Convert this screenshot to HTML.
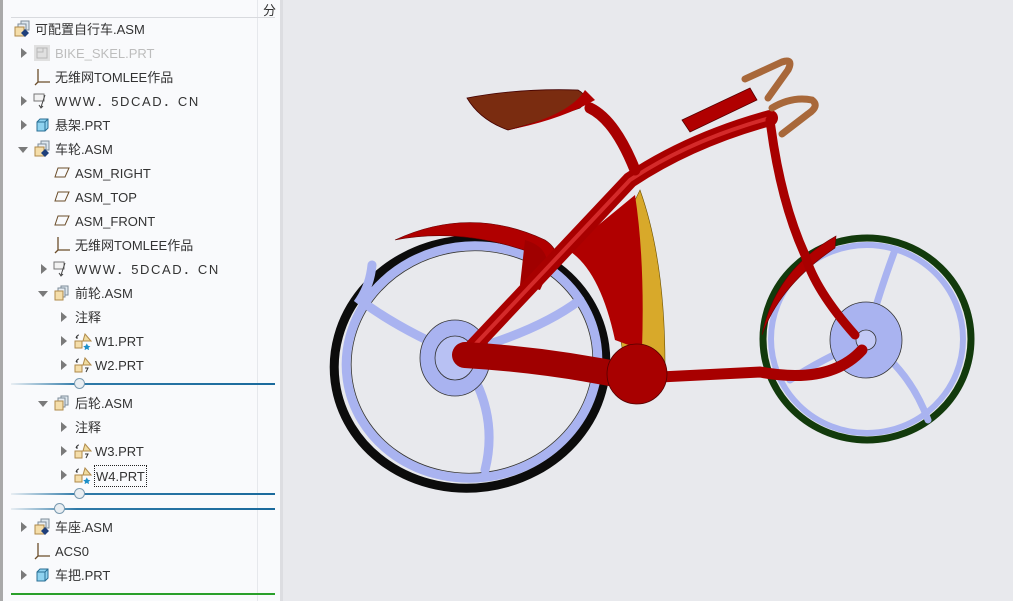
<!DOCTYPE html>
<html><head><meta charset="utf-8"><style>
*{margin:0;padding:0;box-sizing:border-box}
body{width:1013px;height:601px;overflow:hidden;background:#e8e9ed;font-family:"Liberation Sans","Noto Sans CJK SC",sans-serif;position:relative}
#lb{position:absolute;left:0;top:0;width:3px;height:601px;background:#a9a9a9}
#panel{position:absolute;left:3px;top:0;width:277px;height:601px;background:#f9fafc}
#strip{position:absolute;left:280px;top:0;width:3px;height:601px;background:#dcdde1}
#vsep{position:absolute;left:257px;top:0;width:1px;height:601px;background:#e6e8ec}
#hline{position:absolute;left:11px;top:17px;width:264px;height:1px;background:#d8dade}
#fen{position:absolute;left:263px;top:0px;font-size:13px;color:#333}
.r{position:absolute;font-size:13px;color:#333;height:24px;line-height:26px;white-space:nowrap}
.a{position:absolute;width:0;height:0;border-top:5px solid transparent;border-bottom:5px solid transparent;border-left:6px solid #7a7a7a}
.d{position:absolute;width:0;height:0;border-left:5px solid transparent;border-right:5px solid transparent;border-top:6px solid #7a7a7a}
.ic{position:absolute}
.w{letter-spacing:1.6px}
.sep{position:absolute;left:11px;width:264px;height:2px;background:linear-gradient(90deg,#e8eef3,#2f7aa8 25%,#1a6a9c)}
.knob{position:absolute;width:11px;height:11px;border-radius:50%;border:1px solid #7a9ab0;background:#e9eef2}
</style></head><body>
<div id="lb"></div><div id="panel"></div><div id="strip"></div><div id="vsep"></div><div id="hline"></div>
<div id="fen">分</div>

<svg class="ic" style="left:14px;top:20px" width="20" height="18"><rect x="7" y="1" width="8" height="9" fill="#dfe8ef" stroke="#7d8c99"/><rect x="4" y="4" width="8" height="9" fill="#e8eef4" stroke="#7d8c99"/><rect x="1" y="7" width="9" height="9" fill="#f5deaa" stroke="#b08a4a"/><path d="M11 9l4 4-4 4-4-4z" fill="#1f3f7a"/></svg>
<div class="r" style="left:35px;top:17px">可配置自行车.ASM</div>

<div class="a" style="left:21px;top:48px"></div>
<svg class="ic" style="left:34px;top:45px" width="16" height="16"><rect x="0" y="0" width="16" height="16" fill="#e0e0e0"/><rect x="3" y="3" width="10" height="10" fill="none" stroke="#b8b8b8"/><path d="M3 7h6V3" fill="none" stroke="#b8b8b8"/></svg>
<div class="r" style="left:55px;top:41px;color:#bdbdbd">BIKE_SKEL.PRT</div>

<svg class="ic" style="left:34px;top:68px" width="18" height="18"><path d="M4 1v13h12M4 14l-3 3" fill="none" stroke="#6b4d2a" stroke-width="1.3"/></svg>
<div class="r" style="left:55px;top:65px">无维网TOMLEE作品</div>

<div class="a" style="left:21px;top:96px"></div>
<svg class="ic" style="left:33px;top:92px" width="18" height="18"><rect x="1" y="2" width="10" height="7" fill="#f2f2f2" stroke="#777"/><path d="M12 3l-4 12M6 13l2 3 2-2" fill="none" stroke="#444"/></svg>
<div class="r w" style="left:55px;top:89px">WWW．5DCAD．CN</div>

<div class="a" style="left:21px;top:120px"></div>
<svg class="ic" style="left:34px;top:118px" width="16" height="16"><path d="M3 4l3-3h8v9l-3 3H3z" fill="#8fd3f0" stroke="#2a6f95"/><path d="M3 4h8v9M11 4l3-3" fill="none" stroke="#2a6f95"/></svg>
<div class="r" style="left:55px;top:113px">悬架.PRT</div>

<div class="d" style="left:18px;top:147px"></div>
<svg class="ic" style="left:34px;top:140px" width="20" height="18"><rect x="7" y="1" width="8" height="9" fill="#dfe8ef" stroke="#7d8c99"/><rect x="4" y="4" width="8" height="9" fill="#e8eef4" stroke="#7d8c99"/><rect x="1" y="7" width="9" height="9" fill="#f5deaa" stroke="#b08a4a"/><path d="M11 9l4 4-4 4-4-4z" fill="#1f3f7a"/></svg>
<div class="r" style="left:55px;top:137px">车轮.ASM</div>

<svg class="ic" style="left:54px;top:167px" width="16" height="12"><path d="M4 1h11l-4 9H1z" fill="none" stroke="#6b4d2a"/></svg>
<div class="r" style="left:75px;top:161px">ASM_RIGHT</div>
<svg class="ic" style="left:54px;top:191px" width="16" height="12"><path d="M4 1h11l-4 9H1z" fill="none" stroke="#6b4d2a"/></svg>
<div class="r" style="left:75px;top:185px">ASM_TOP</div>
<svg class="ic" style="left:54px;top:215px" width="16" height="12"><path d="M4 1h11l-4 9H1z" fill="none" stroke="#6b4d2a"/></svg>
<div class="r" style="left:75px;top:209px">ASM_FRONT</div>
<svg class="ic" style="left:54px;top:236px" width="18" height="18"><path d="M4 1v13h12M4 14l-3 3" fill="none" stroke="#6b4d2a" stroke-width="1.3"/></svg>
<div class="r" style="left:75px;top:233px">无维网TOMLEE作品</div>

<div class="a" style="left:41px;top:264px"></div>
<svg class="ic" style="left:53px;top:260px" width="18" height="18"><rect x="1" y="2" width="10" height="7" fill="#f2f2f2" stroke="#777"/><path d="M12 3l-4 12M6 13l2 3 2-2" fill="none" stroke="#444"/></svg>
<div class="r w" style="left:75px;top:257px">WWW．5DCAD．CN</div>

<div class="d" style="left:38px;top:291px"></div>
<svg class="ic" style="left:54px;top:285px" width="16" height="16"><rect x="7" y="1" width="7" height="9" fill="#dfe8ef" stroke="#7d8c99"/><rect x="4" y="3" width="7" height="9" fill="#e8eef4" stroke="#7d8c99"/><rect x="1" y="6" width="8" height="9" fill="#f5deaa" stroke="#b08a4a"/></svg>
<div class="r" style="left:75px;top:281px">前轮.ASM</div>

<div class="a" style="left:61px;top:312px"></div>
<div class="r" style="left:75px;top:305px">注释</div>
<div class="a" style="left:61px;top:336px"></div>
<svg class="ic" style="left:74px;top:333px" width="18" height="17"><path d="M11 1l6 7h-8z" fill="#f0dca0" stroke="#b08a4a"/><rect x="1" y="8" width="7" height="7" fill="#f5deaa" stroke="#b08a4a"/><path d="M2 5q1-3 3-3M3 3v3" fill="none" stroke="#333"/><path d="M13 10l1.5 3 3 .5-2.3 2 .6 3-2.8-1.6-2.8 1.6.6-3-2.3-2 3-.5z" transform="scale(.8) translate(3,3)" fill="#1d8fc9"/></svg>
<div class="r" style="left:95px;top:329px">W1.PRT</div>
<div class="a" style="left:61px;top:360px"></div>
<svg class="ic" style="left:74px;top:357px" width="18" height="17"><path d="M11 1l6 7h-8z" fill="#f0dca0" stroke="#b08a4a"/><rect x="1" y="8" width="7" height="7" fill="#f5deaa" stroke="#b08a4a"/><path d="M2 5q1-3 3-3M3 3v3M11 11h3l-2 4" fill="none" stroke="#333"/></svg>
<div class="r" style="left:95px;top:353px">W2.PRT</div>

<div class="sep" style="top:383px"></div><div class="knob" style="left:74px;top:378px"></div>

<div class="d" style="left:38px;top:401px"></div>
<svg class="ic" style="left:54px;top:395px" width="16" height="16"><rect x="7" y="1" width="7" height="9" fill="#dfe8ef" stroke="#7d8c99"/><rect x="4" y="3" width="7" height="9" fill="#e8eef4" stroke="#7d8c99"/><rect x="1" y="6" width="8" height="9" fill="#f5deaa" stroke="#b08a4a"/></svg>
<div class="r" style="left:75px;top:391px">后轮.ASM</div>
<div class="a" style="left:61px;top:422px"></div>
<div class="r" style="left:75px;top:415px">注释</div>
<div class="a" style="left:61px;top:446px"></div>
<svg class="ic" style="left:74px;top:443px" width="18" height="17"><path d="M11 1l6 7h-8z" fill="#f0dca0" stroke="#b08a4a"/><rect x="1" y="8" width="7" height="7" fill="#f5deaa" stroke="#b08a4a"/><path d="M2 5q1-3 3-3M3 3v3M11 11h3l-2 4" fill="none" stroke="#333"/></svg>
<div class="r" style="left:95px;top:439px">W3.PRT</div>
<div class="a" style="left:61px;top:470px"></div>
<svg class="ic" style="left:74px;top:467px" width="18" height="17"><path d="M11 1l6 7h-8z" fill="#f0dca0" stroke="#b08a4a"/><rect x="1" y="8" width="7" height="7" fill="#f5deaa" stroke="#b08a4a"/><path d="M2 5q1-3 3-3M3 3v3" fill="none" stroke="#333"/><path d="M13 10l1.5 3 3 .5-2.3 2 .6 3-2.8-1.6-2.8 1.6.6-3-2.3-2 3-.5z" transform="scale(.8) translate(3,3)" fill="#1d8fc9"/></svg>
<div class="r" style="left:94px;top:465px;height:22px;line-height:22px;border:1px dotted #222;padding:0 1px">W4.PRT</div>

<div class="sep" style="top:493px"></div><div class="knob" style="left:74px;top:488px"></div>
<div class="sep" style="top:508px"></div><div class="knob" style="left:54px;top:503px"></div>

<div class="a" style="left:21px;top:522px"></div>
<svg class="ic" style="left:34px;top:518px" width="20" height="18"><rect x="7" y="1" width="8" height="9" fill="#dfe8ef" stroke="#7d8c99"/><rect x="4" y="4" width="8" height="9" fill="#e8eef4" stroke="#7d8c99"/><rect x="1" y="7" width="9" height="9" fill="#f5deaa" stroke="#b08a4a"/><path d="M11 9l4 4-4 4-4-4z" fill="#1f3f7a"/></svg>
<div class="r" style="left:55px;top:515px">车座.ASM</div>
<svg class="ic" style="left:34px;top:542px" width="18" height="18"><path d="M4 1v13h12M4 14l-3 3" fill="none" stroke="#6b4d2a" stroke-width="1.3"/></svg>
<div class="r" style="left:55px;top:539px">ACS0</div>
<div class="a" style="left:21px;top:570px"></div>
<svg class="ic" style="left:34px;top:568px" width="16" height="16"><path d="M3 4l3-3h8v9l-3 3H3z" fill="#8fd3f0" stroke="#2a6f95"/><path d="M3 4h8v9M11 4l3-3" fill="none" stroke="#2a6f95"/></svg>
<div class="r" style="left:55px;top:563px">车把.PRT</div>
<div style="position:absolute;left:11px;top:593px;width:264px;height:2px;background:#2aa02a"></div>

<svg style="position:absolute;left:0;top:0" width="1013" height="601">
<ellipse cx="470" cy="364" rx="136" ry="124" transform="rotate(-8 470 364)" fill="none" stroke="#0c0c0c" stroke-width="9"/>
<ellipse cx="472" cy="362" rx="126" ry="116" transform="rotate(-8 472 362)" fill="none" stroke="#a9b3f0" stroke-width="9"/>
<ellipse cx="472" cy="362" rx="121" ry="111" transform="rotate(-8 472 362)" fill="none" stroke="#333" stroke-width="0.8"/>
<g fill="none" stroke="#a9b3f0" stroke-width="9" stroke-linecap="round">
<path d="M460 355 Q400 330 360 300 Q370 285 372 265"/><path d="M460 355 Q500 410 485 470"/><path d="M470 350 Q540 330 580 300"/></g>
<ellipse cx="455" cy="358" rx="35" ry="38" fill="#a9b3f0" stroke="#333" stroke-width="0.8"/>
<ellipse cx="455" cy="358" rx="20" ry="22" fill="#b8c1f3" stroke="#333" stroke-width="0.8"/>
<ellipse cx="867" cy="339" rx="104" ry="101" fill="none" stroke="#123a0c" stroke-width="7"/>
<ellipse cx="867" cy="339" rx="96" ry="94" fill="none" stroke="#a9b3f0" stroke-width="6"/>
<g fill="none" stroke="#a9b3f0" stroke-width="7" stroke-linecap="round">
<path d="M866 340 Q880 290 895 250"/><path d="M866 340 Q910 370 928 420"/><path d="M866 340 Q820 360 790 380"/></g>
<ellipse cx="866" cy="340" rx="36" ry="38" fill="#a9b3f0" stroke="#333" stroke-width="0.8"/>
<ellipse cx="866" cy="340" rx="10" ry="10" fill="#c2c9f5" stroke="#333" stroke-width="0.8"/>
<path d="M395 240 Q470 205 545 240 Q560 250 555 262 Q470 225 395 240z" fill="#b00000" stroke="#600" stroke-width="0.6"/>
<path d="M525 240 Q560 250 540 290 L520 285z" fill="#a00000"/>
<path d="M640 190 Q665 260 665 365 L625 365 Q615 300 600 272z" fill="#d8a92a" stroke="#6a5000" stroke-width="0.6"/>
<path d="M635 195 L568 250 Q600 270 615 340 L642 350 Q645 260 635 195z" fill="#b00000"/>
<path d="M836 236 Q775 270 762 335 Q780 285 835 248z" fill="#b00000" stroke="#600" stroke-width="0.6"/>
<g fill="none" stroke-linecap="round">
<path d="M470 350 L630 180 Q690 140 770 118" stroke="#a80000" stroke-width="16"/>
<path d="M470 350 L630 180 Q690 140 770 118" stroke="#d42a2a" stroke-width="4"/>
<path d="M770 120 Q780 200 805 255 Q815 290 855 335" stroke="#a80000" stroke-width="9"/>
<path d="M590 108 Q615 120 635 170" stroke="#a80000" stroke-width="11"/>
<path d="M465 355 Q550 360 635 378" stroke="#a00000" stroke-width="26"/>
<path d="M640 378 L760 372 Q830 385 862 350" stroke="#a80000" stroke-width="11"/>
</g>
<path d="M682 120 L750 88 L757 100 L690 132z" fill="#b00000" stroke="#500" stroke-width="0.8"/>
<circle cx="637" cy="374" r="30" fill="#a80000" stroke="#500" stroke-width="0.8"/>
<path d="M467 98 Q520 88 578 90 Q592 98 580 108 Q540 122 508 130 Q480 120 467 98z" fill="#7a2c10" stroke="#400" stroke-width="0.8"/>
<path d="M508 130 Q560 120 595 100 L585 90 Q570 115 508 130z" fill="#b00000"/>
<g fill="none" stroke="#a8683a" stroke-width="7" stroke-linecap="round">
<path d="M745 79 L782 62 Q794 58 788 70 L768 98"/>
<path d="M772 108 Q792 96 812 100 Q820 106 808 114 L782 134"/>
</g>
</svg>
</body></html>
